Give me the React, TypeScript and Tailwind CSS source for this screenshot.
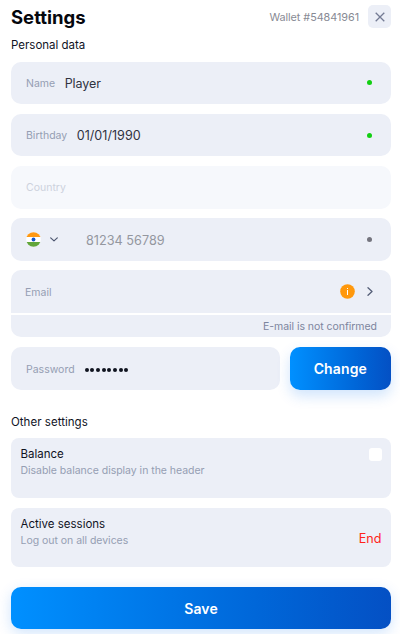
import type { ReactNode } from "react";

function Row({
  children,
  padding = "pl-[15px] pr-[19px]",
  fill = "bg-[#eceff7]",
  corners = "rounded-[10px]",
  className = "",
}: {
  children: ReactNode;
  padding?: string;
  fill?: string;
  corners?: string;
  className?: string;
}) {
  return <div className={`flex h-[42.5px] items-center ${padding} ${fill} ${corners} ${className}`}>{children}</div>;
}

function Label({ children, offset = "mt-[2px]" }: { children: ReactNode; offset?: string }) {
  return <span className={`text-[10.5px] text-[#959eb3] ${offset}`}>{children}</span>;
}

function Dot({ className }: { className: string }) {
  return <span className={`ml-auto size-[5px] rounded-full ${className}`} />;
}

export default function App() {
  return (
    <div className="flex h-[634px] w-[400px] flex-col overflow-hidden bg-white pl-[11px] pr-[9px] font-['Inter',sans-serif] leading-none text-[#10131f]">
      <header className="flex h-[33px] shrink-0 items-center">
        <h1 className="mt-[2px] text-[18.5px] font-bold text-[#05070d]">Settings</h1>
        <span className="ml-auto mt-[3px] text-[10.8px] tracking-[-0.04px] text-[#888a94]">Wallet #54841961</span>
        <button className="ml-[9px] flex size-[23px] items-center justify-center rounded-[5px] bg-[#eceff7]" aria-label="Close">
          <svg className="size-[10px]" viewBox="0 0 10 10" fill="none" stroke="#747b94" strokeWidth="1.3">
            <path d="M.7.7 9.3 9.3M9.3.7.7 9.3" />
          </svg>
        </button>
      </header>
      <h2 className="mt-[7px] h-[21.7px] shrink-0 text-[11.5px]">Personal data</h2>

      <div className="flex shrink-0 flex-col gap-[9.7px]">
        <Row>
          <Label>Name</Label>
          <span className="ml-[9.5px] mt-[2px] text-[12.5px] tracking-[-0.05px] text-[#30333f]">Player</span>
          <Dot className="bg-[#12cf12]" />
        </Row>
        <Row>
          <Label>Birthday</Label>
          <span className="ml-[9.5px] mt-[2px] text-[12.6px] text-[#30333f]">01/01/1990</span>
          <Dot className="bg-[#12cf12]" />
        </Row>
        <Row fill="bg-[#f6f8fc]">
          <span className="mt-[2px] text-[10.5px] text-[#cdd2dd]">Country</span>
        </Row>
        <Row>
          <svg className="size-[15px]" viewBox="0 0 15 15">
            <clipPath id="flag"><circle cx="7.5" cy="7.5" r="7.3" /></clipPath>
            <g clipPath="url(#flag)">
              <path fill="#fff" d="M0 0h15v15H0z" />
              <path fill="#ff9811" d="M0 0h15v5H0z" />
              <path fill="#61a63b" d="M0 10h15v5H0z" />
            </g>
            <circle cx="7.5" cy="7.5" r="1.9" fill="#1556c8" />
          </svg>
          <svg className="ml-[8.5px] h-[5px] w-[8px]" viewBox="0 0 8 5" fill="none" stroke="#4d5670" strokeWidth="1.2" strokeLinecap="round" strokeLinejoin="round">
            <path d="m.7.9 3.3 3 3.3-3" />
          </svg>
          <span className="ml-[28.5px] mt-[3.5px] text-[12.7px] text-[#94979f]">81234 56789</span>
          <Dot className="bg-[#74747e]" />
        </Row>
        <div className="flex flex-col gap-[1.8px]">
          <Row corners="rounded-t-[10px]" padding="pl-[14px] pr-[18.5px]">
            <Label offset="mt-[3.5px]">Email</Label>
            <svg className="ml-auto size-[15px]" viewBox="0 0 15 15">
              <circle cx="7.5" cy="7.5" r="7.3" fill="#ff980c" />
              <path d="M7 4h1v1H7zM7 6h1v5H7z" fill="#fff" />
            </svg>
            <svg className="ml-[12px] h-[9px] w-[6px]" viewBox="0 0 6 9" fill="none" stroke="#555e78" strokeWidth="1.3" strokeLinecap="round" strokeLinejoin="round">
              <path d="m1 .7 4 3.8-4 3.8" />
            </svg>
          </Row>
          <div className="flex h-[22.7px] items-center justify-end rounded-b-[10px] bg-[#eceff7] pr-[14px] pt-[2px] text-[10.5px] tracking-[-0.04px] text-[#7d859e]">
            E-mail is not confirmed
          </div>
        </div>
        <div className="flex gap-[9.5px]">
          <Row className="flex-1">
            <Label offset="mt-[3.5px]">Password</Label>
            <span className="ml-[10px] flex gap-[1.7px] pt-[3.5px]">
              {Array.from({ length: 8 }, (_, i) => (
                <i key={i} className="size-[4px] rounded-full bg-[#10131f]" />
              ))}
            </span>
          </Row>
          <button className="h-[42.5px] w-[101.3px] rounded-[10px] bg-linear-to-r from-[#0090ff] to-[#0450c4] pt-px text-[14px] font-semibold tracking-[0.15px] text-white shadow-[0_6px_14px_#0070f030]">
            Change
          </button>
        </div>
      </div>

      <h2 className="mt-[27.5px] h-[21px] shrink-0 text-[11.5px] tracking-[0.03px]">Other settings</h2>
      <div className="flex shrink-0 flex-col gap-[10px]">
        <section className="flex h-[59.5px] justify-between rounded-[8px] bg-[#eceff7] px-[9.5px] pt-[11px]">
          <div>
            <h3 className="text-[11.5px]">Balance</h3>
            <p className="mt-[5.5px] text-[10.5px] tracking-[-0.03px] text-[#959eb3]">Disable balance display in the header</p>
          </div>
          <span className="-mt-[1.5px] size-[13px] rounded-[3px] bg-white" />
        </section>
        <section className="flex h-[59.5px] justify-between rounded-[8px] bg-[#eceff7] px-[9.5px] pt-[11px]">
          <div>
            <h3 className="text-[11.5px]">Active sessions</h3>
            <p className="mt-[5.5px] text-[10.5px] tracking-[-0.03px] text-[#959eb3]">Log out on all devices</p>
          </div>
          <button className="mt-[13.5px] h-[14px] text-[12.6px] text-[#ff241c]">End</button>
        </section>
      </div>
      <button className="mt-[19.7px] h-[42.5px] shrink-0 rounded-[10px] bg-linear-to-r from-[#0090ff] to-[#0450c4] pt-px text-[14px] font-semibold tracking-[0.15px] text-white shadow-[0_4px_14px_#0070f030]">
        Save
      </button>
    </div>
  );
}
